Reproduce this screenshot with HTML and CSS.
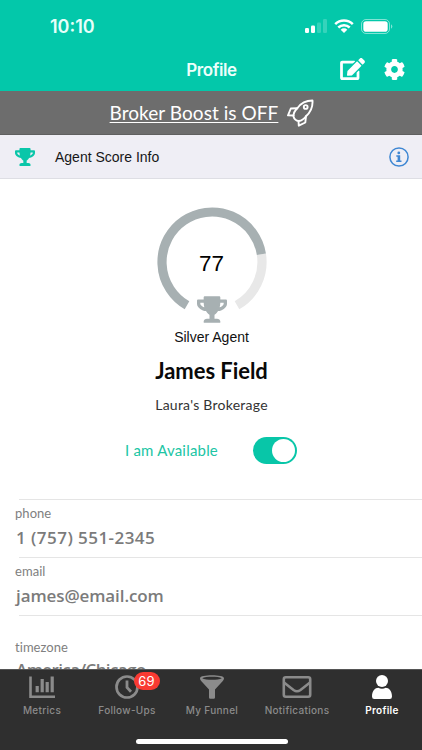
FILE: index.html
```html
<!DOCTYPE html>
<html lang="en">
<head>
<meta charset="utf-8">
<meta name="viewport" content="width=device-width, initial-scale=1">
<title>Profile</title>
<link rel="stylesheet" href="styles.css">
</head>
<body>
<svg class="defs" width="0" height="0" aria-hidden="true">
  <symbol id="trophy" viewBox="0 0 576 512"><path d="M552 64H448V24c0-13.300-10.700-24-24-24H152c-13.300 0-24 10.700-24 24v40H24C10.700 64 0 74.700 0 88v56c0 35.700 22.500 72.400 61.900 100.700 31.500 22.700 69.800 37.100 110 41.700C203.300 338.500 240 360 240 360v72h-48c-35.300 0-64 20.700-64 56v12c0 6.600 5.400 12 12 12h296c6.600 0 12-5.400 12-12v-12c0-35.300-28.700-56-64-56h-48v-72s36.700-21.500 68.100-73.600c40.300-4.600 78.600-19 110-41.700 39.300-28.300 61.900-65 61.900-100.700V88c0-13.300-10.700-24-24-24zM99.300 192.800C74.900 175.200 64 155.600 64 144v-16h64.200c1 32.600 5.800 61.200 12.800 86.200-15.100-5.200-29.200-12.400-41.700-21.400zM512 144c0 16.100-17.700 36.100-35.300 48.800-12.500 9-26.700 16.200-41.800 21.400 7-25 11.800-53.600 12.800-86.200H512v16z"/></symbol>
</svg>
<div class="app">
  <header class="top">
    <div class="status">
      <span class="clock">10:10</span>
      <div class="indicators">
        <svg class="signal" viewBox="0 0 22 14"><rect x="0" y="9" width="4" height="5" rx="1.2"/><rect x="6" y="6.5" width="4" height="7.5" rx="1.2"/><g opacity=".2"><rect x="12" y="3.5" width="4" height="10.500" rx="1.2"/><rect x="18" y="0" width="4" height="14" rx="1.2"/></g></svg>
        <svg class="wifi" viewBox="0 0 20 14"><g fill="none" stroke="#fff" stroke-width="2.500"><path d="M1.200 5.100a12.600 12.600 0 0 1 17.600 0"/><path d="M4.300 8.500a8.200 8.200 0 0 1 11.400 0"/></g><path d="M10 14 6.700 10.700a4.700 4.700 0 0 1 6.600 0z"/></svg>
        <svg class="battery" viewBox="0 0 32 15"><rect x=".5" y=".5" width="28" height="14" rx="4.500" fill="none" stroke="#fff" stroke-opacity=".5"/><rect x="2.300" y="2.300" width="24.400" height="10.400" rx="2.800"/><path d="M30 5.300a2.500 2.500 0 0 1 0 4.400z" opacity=".5"/></svg>
      </div>
    </div>
    <div class="nav">
      <h1>Profile</h1>
      <div class="actions">
        <svg class="edit" viewBox="0 0 576 512"><path d="M402.600 83.200l90.200 90.200c3.800 3.800 3.800 10 0 13.800L274.400 405.600l-92.800 10.300c-12.400 1.400-22.900-9.100-21.500-21.500l10.300-92.800L388.800 83.200c3.800-3.800 10-3.800 13.800 0zm162-22.900l-48.800-48.800c-15.200-15.200-39.900-15.200-55.200 0l-35.400 35.400c-3.800 3.800-3.800 10 0 13.800l90.200 90.200c3.800 3.800 10 3.800 13.800 0l35.400-35.400c15.200-15.300 15.200-40 0-55.200zM384 346.200V448H64V128h229.800c3.200 0 6.200-1.300 8.500-3.500l40-40c7.600-7.600 2.200-20.500-8.500-20.500H48C21.500 64 0 85.500 0 112v352c0 26.500 21.500 48 48 48h352c26.500 0 48-21.500 48-48V306.200c0-10.700-12.900-16-20.500-8.500l-40 40c-2.200 2.300-3.500 5.300-3.500 8.500z"/></svg>
        <svg class="cog" viewBox="8 8 496 496"><path d="M487.400 315.700l-42.600-24.600c4.300-23.200 4.300-47 0-70.200l42.600-24.600c4.900-2.800 7.100-8.600 5.500-14-11.100-35.600-30-67.800-54.700-94.600-3.800-4.100-10-5.100-14.800-2.300L380.800 110c-17.900-15.400-38.500-27.300-60.800-35.100V25.800c0-5.600-3.900-10.500-9.400-11.700-36.700-8.200-74.300-7.800-109.200 0-5.500 1.200-9.400 6.100-9.400 11.700V75c-22.200 7.900-42.800 19.800-60.800 35.100L88.700 85.500c-4.900-2.800-11-1.900-14.800 2.300-24.700 26.700-43.600 58.900-54.700 94.600-1.700 5.400.6 11.200 5.500 14L67.300 221c-4.300 23.200-4.300 47 0 70.200l-42.600 24.600c-4.900 2.800-7.100 8.600-5.500 14 11.100 35.600 30 67.800 54.700 94.600 3.800 4.100 10 5.100 14.800 2.300l42.600-24.600c17.900 15.400 38.500 27.300 60.800 35.100v49.200c0 5.600 3.900 10.500 9.400 11.700 36.700 8.200 74.300 7.800 109.200 0 5.500-1.200 9.400-6.100 9.400-11.700v-49.200c22.200-7.900 42.800-19.800 60.800-35.100l42.600 24.600c4.900 2.800 11 1.900 14.800-2.300 24.700-26.700 43.600-58.900 54.700-94.600 1.500-5.500-.7-11.300-5.600-14.100zM256 336c-44.100 0-80-35.900-80-80s35.900-80 80-80 80 35.900 80 80-35.900 80-80 80z"/></svg>
      </div>
    </div>
  </header>

  <div class="boost">
    <a class="boost-link">Broker Boost is OFF</a>
    <svg class="rocket outline" viewBox="0 0 27 28" stroke="#fff" stroke-width="1.900" stroke-linejoin="round" stroke-linecap="round"><path d="M25.500 1.500C18.500 1.500 14 4 10.300 9.200Q6.300 13 6.500 17.500Q7.500 21.500 11.800 22Q16 21.500 19 17.200C23.300 13.500 26 9 25.500 1.500z"/><path d="M10.300 9.200 3.800 9.500 1 16.300 6.500 16.500M19 17.200 18.300 23.500 11.800 26.700 11.500 22"/><circle cx="18.700" cy="8" r="1.900"/></svg>
  </div>

  <div class="score-row">
    <svg class="score-trophy"><use href="#trophy"/></svg>
    <span class="score-title">Agent Score Info</span>
    <svg class="info" viewBox="0 0 20 20"><circle cx="10" cy="10" r="9.100" fill="none" stroke="#3f87d3" stroke-width="1.500"/><circle cx="9.800" cy="5.900" r="1.400" fill="#3f87d3"/><path d="M7.300 8.300h3.900v5.200h1.300v1.500H7.200v-1.500h1.400V9.800H7.300z" fill="#3f87d3"/></svg>
  </div>

  <main class="profile">
    <div class="gauge">
      <svg class="dial outline" viewBox="0 0 110 110" stroke-width="9.200"><path d="M80 98.300A50 50 0 0 0 104.400 47.200" stroke="#e8e8e8"/><path d="M30 98.300A50 50 0 1 1 104.400 47.200" stroke="#a7b0b2"/></svg>
      <span class="value">77</span>
      <svg class="gauge-trophy"><use href="#trophy"/></svg>
    </div>
    <div class="level">Silver Agent</div>
    <h2>James Field</h2>
    <div class="brokerage">Laura's Brokerage</div>
    <div class="availability"><span>I am Available</span><div class="toggle"><i></i></div></div>
  </main>

  <section class="fields">
    <div class="field"><label>phone</label><strong class="phone">1 (757) 551-2345</strong></div>
    <div class="field"><label>email</label><strong class="email">james@email.com</strong></div>
    <div class="field zone"><label>timezone</label><strong>America/Chicago</strong></div>
  </section>

  <nav class="tabs">
    <div class="tab"><svg viewBox="0 0 28 26"><path d="M2.500 2.500V22.800H27" fill="none" stroke="currentColor" stroke-width="2.600"/><path d="M9.200 12v6.200M14.200 5v13.200M19.200 8v10.200M24.200 2.500v15.700" stroke="currentColor" stroke-width="3.200"/></svg><span>Metrics</span></div>
    <div class="tab"><svg viewBox="0 0 28 26"><circle cx="14" cy="13" r="10.500" fill="none" stroke="currentColor" stroke-width="2.700"/><path d="M14 6.500V13.500L18 17.800" fill="none" stroke="currentColor" stroke-width="2.800"/></svg><b class="badge">69</b><span>Follow-Ups</span></div>
    <div class="tab"><svg viewBox="0 0 28 26"><path fill-rule="evenodd" d="M2 4.200C2 .4 26 .4 26 4.200c0 1.200-.6 2.100-1.400 3L17 15.500V23.500Q17 24.800 15.700 24.800H12.300Q11 24.800 11 23.500V15.500L3.400 7.200C2.600 6.300 2 5.400 2 4.200zM4.200 4.200C8 6.200 20 6.200 23.800 4.200 20 2.300 8 2.300 4.200 4.200z" fill="currentColor"/></svg><span>My Funnel</span></div>
    <div class="tab"><svg class="mail" viewBox="0 0 30 26"><g fill="none" stroke="currentColor" stroke-width="2.600"><rect x="1.800" y="3.300" width="26.400" height="19.400" rx="2"/><path d="M2 8.500 11.500 16Q15 18.500 18.500 16L28 8.500"/></g></svg><span>Notifications</span></div>
    <div class="tab active"><svg viewBox="0 0 28 26"><circle cx="14" cy="7" r="6" fill="currentColor"/><path d="M4 22.500C4 17 7.200 13.800 10.300 13.800 12.500 15 15.500 15 17.700 13.800 20.800 13.800 24 17 24 22.500Q24 25 21.700 25H6.300Q4 25 4 22.500z" fill="currentColor"/></svg><span>Profile</span></div>
    <div class="home"></div>
  </nav>
</div>
</body>
</html>
```
FILE: styles.css
```css
* { box-sizing: border-box; }
body { margin: 0; background: #fff; font-family: Lato, "Liberation Sans", sans-serif; }
.defs { display: block; height: 0; }
svg { fill: currentColor; flex: none; }
svg.outline { fill: none; }
.app { width: 422px; height: 750px; display: flex; flex-direction: column; overflow: hidden; position: relative; }

.top { height: 91px; flex: none; background: #03c8aa; color: #fff; }
.status { height: 52px; padding: 0 29px 0 50px; display: flex; justify-content: space-between; align-items: center; font-family: Inter, sans-serif; }
.clock { font-size: 18px; font-weight: 600; letter-spacing: 0; color: #e6fffa; padding-top: 1px; }
.indicators { display: flex; align-items: center; gap: 7px; }
.signal { width: 22px; height: 14px; }
.wifi { width: 20px; height: 14px; }
.battery { width: 32px; height: 15px; }
.nav { height: 36px; display: grid; grid-template-columns: 1fr auto 1fr; align-items: center; }
h1 { grid-column: 2; margin: 0; padding-left: 1px; font: 600 17px/24px Inter, sans-serif; letter-spacing: -.4px; color: #ecfffb; }
.actions { display: flex; justify-content: flex-end; align-items: center; gap: 19px; padding: 0 17px 2px 0; }
.edit { width: 25px; height: 22px; }
.cog { width: 21px; height: 21px; }

.boost { height: 44px; flex: none; background: #6d6d6d; border-bottom: 1px solid #5f5f5f; color: #fff; display: flex; align-items: center; justify-content: center; gap: 9px; padding-left: 2px; }
.boost-link { font-size: 19px; line-height: 24px; text-decoration: underline; text-decoration-thickness: 1px; text-underline-offset: 2px; letter-spacing: .05px; }
.rocket { width: 27px; height: 28px; }

.score-row { height: 44px; flex: none; background: #efeef5; border-bottom: 1px solid #dedee4; display: flex; align-items: center; padding: 0 13px 0 15px; color: #161618; }
.score-trophy { width: 20px; height: 18px; color: #0ac6a9; }
.score-title { margin-left: 20px; flex: 1; font: 14px/20px "Liberation Sans", sans-serif; }
.info { width: 20px; height: 20px; }

.profile { height: 320px; flex: none; padding: 28px 0 0 1px; display: flex; flex-direction: column; align-items: center; }
.gauge { width: 110px; height: 116px; display: grid; justify-items: center; }
.dial { width: 110px; height: 110px; grid-area: 1 / 1; }
.value { grid-area: 1 / 1; padding-top: 43px; font: 22.5px/28px "Liberation Sans", sans-serif; color: #000; }
.gauge-trophy { grid-area: 1 / 1; align-self: end; width: 30px; height: 27px; color: #a7b0b2; }
.level { margin-top: 5px; font: 14px/18px "Liberation Sans", sans-serif; color: #111; }
h2 { margin: 11px 0 0; font-size: 22px; line-height: 28px; letter-spacing: -.05px; color: #090909; }
.brokerage { margin-top: 10px; font-size: 14px; line-height: 20px; color: #333; letter-spacing: .25px; }
.availability { margin-top: 21px; height: 28px; display: flex; align-items: center; gap: 35px; padding-right: 1px; font-size: 15px; color: #20c5a4; letter-spacing: .2px; }
.toggle { width: 44px; height: 27px; border-radius: 14px; background: #08c6a8; padding: 2px; display: flex; justify-content: flex-end; }
.toggle i { width: 23px; height: 23px; border-radius: 50%; background: #fff; }

.fields { flex: 1; min-height: 0; overflow: hidden; }
.field { height: 58px; padding: 6px 0 0 15px; display: flex; flex-direction: column; color: #777; background: linear-gradient(#e5e5e5, #e5e5e5) 19px 0 / 100% 1px no-repeat; }
.field label { font-size: 13px; line-height: 17px; color: #808080; letter-spacing: .05px; }
.field strong { margin: 5px 0 0 1px; font: 600 17px/22px "Open Sans", sans-serif; color: #7b7b7b; letter-spacing: -.6px; }
.field .phone { letter-spacing: .45px; }
.field .email { letter-spacing: -.1px; }
.zone { height: 80px; padding-top: 24px; }
.zone strong { margin-top: 3px; }

.tabs { height: 81px; flex: none; background: #2f2f2f; border-top: 1px solid #555; display: grid; grid-template-columns: repeat(5, 85px); position: relative; left: -.5px; width: 423px; color: #8b8b8b; font: 500 10px/14px Inter, sans-serif; letter-spacing: .3px; }
.tab { display: flex; flex-direction: column; align-items: center; position: relative; padding-top: 4px; gap: 3px; }
.tab svg { width: 28px; height: 26px; }
.tab .mail { width: 30px; }
.active { color: #fff; font-weight: 600; }
.badge { position: absolute; left: 49px; top: 2px; width: 26px; height: 18px; border-radius: 9px; background: #f93a32; color: #fff; text-align: center; font-size: 13px; font-weight: 400; line-height: 18px; }
.home { position: absolute; left: 136.5px; bottom: 6px; width: 152px; height: 5px; border-radius: 3px; background: #fff; }
```
